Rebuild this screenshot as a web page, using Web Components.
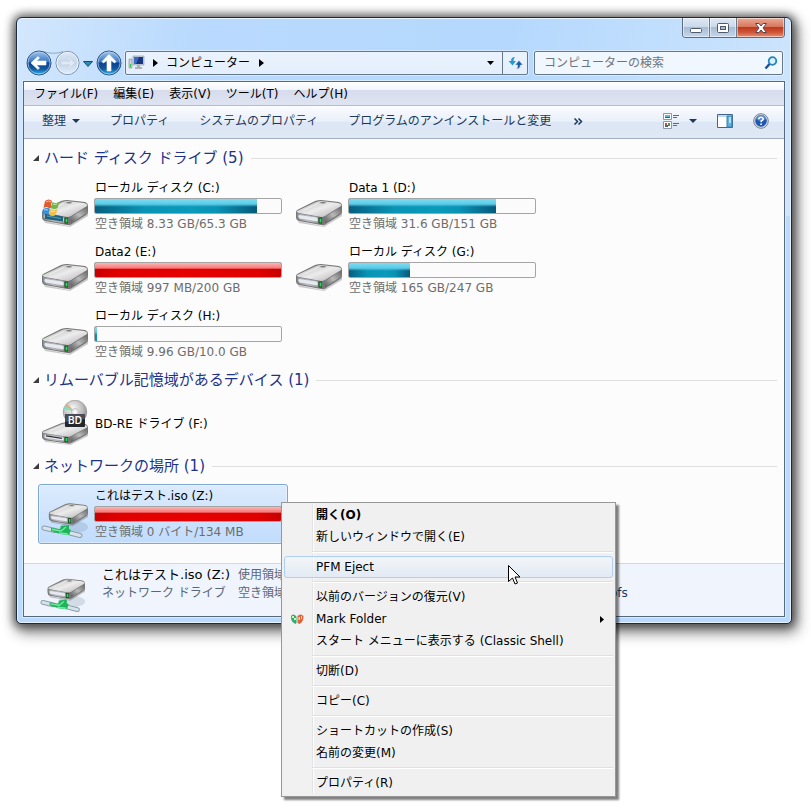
<!DOCTYPE html>
<html lang="ja">
<head>
<meta charset="utf-8">
<title>コンピューター</title>
<style>
  body {
    margin: 0;
    padding: 17px 19px 24px 16px;
    background: #fff;
    color: #000;
    font: 12px/18px "DejaVu Sans", "Noto Sans CJK JP", sans-serif;
  }
</style>
</head>
<body>

<explorer-window>
  <caption-buttons slot="caption"></caption-buttons>
  <nav-bar slot="nav" location="コンピューター"></nav-bar>
  <menu-bar slot="bars"></menu-bar>
  <command-bar slot="bars"></command-bar>

  <drive-group label="ハード ディスク ドライブ (5)">
    <drive-tile name="ローカル ディスク (C:)" icon="system" used="87" free="空き領域 8.33 GB/65.3 GB"></drive-tile>
    <drive-tile name="Data 1 (D:)" icon="disk" used="79" free="空き領域 31.6 GB/151 GB"></drive-tile>
    <drive-tile name="Data2 (E:)" icon="disk" used="100" full free="空き領域 997 MB/200 GB"></drive-tile>
    <drive-tile name="ローカル ディスク (G:)" icon="disk" used="33" free="空き領域 165 GB/247 GB"></drive-tile>
    <drive-tile name="ローカル ディスク (H:)" icon="disk" used="1" free="空き領域 9.96 GB/10.0 GB"></drive-tile>
  </drive-group>
  <drive-group label="リムーバブル記憶域があるデバイス (1)">
    <drive-tile name="BD-RE ドライブ (F:)" icon="optical"></drive-tile>
  </drive-group>
  <drive-group label="ネットワークの場所 (1)">
    <drive-tile name="これはテスト.iso (Z:)" icon="network" used="100" full selected free="空き領域 0 バイト/134 MB"></drive-tile>
  </drive-group>

  <details-pane slot="details"></details-pane>
</explorer-window>

<context-menu>
  <menu-entry strong>開く(O)</menu-entry>
  <menu-entry>新しいウィンドウで開く(E)</menu-entry>
  <menu-line></menu-line>
  <menu-entry active>PFM Eject</menu-entry>
  <menu-line></menu-line>
  <menu-entry>以前のバージョンの復元(V)</menu-entry>
  <menu-entry submenu>
    <svg slot="icon" width="14" height="12" viewBox="0 0 14 12">
      <path d="M1 3q2-3 5 0l.5 1v6l-1 1q-5-2-4.500-8z" fill="#2fae74"/>
      <path d="M7.500 3q3-3 6 0q0 6-4 8l-2-1z" fill="#e0633a"/>
      <path d="M2 3h2v2H2zM4 5h2v2H4z" fill="#d8f5b0"/>
      <path d="M11 3h1v3h-1zM8.500 4h1.500v3H8.500z" fill="#f9d9a0"/>
    </svg>
    Mark Folder
  </menu-entry>
  <menu-entry>スタート メニューに表示する (Classic Shell)</menu-entry>
  <menu-line></menu-line>
  <menu-entry>切断(D)</menu-entry>
  <menu-line></menu-line>
  <menu-entry>コピー(C)</menu-entry>
  <menu-line></menu-line>
  <menu-entry>ショートカットの作成(S)</menu-entry>
  <menu-entry>名前の変更(M)</menu-entry>
  <menu-line></menu-line>
  <menu-entry>プロパティ(R)</menu-entry>
</context-menu>

<mouse-pointer></mouse-pointer>

<script>
  // Shared reset for every shadow root.
  const base = `
    :host, * { box-sizing: border-box; }
    svg { display: block; }
    button {
      margin: 0;
      padding: 0;
      border: 0;
      background: none;
      color: inherit;
      font: inherit;
      text-align: left;
      white-space: nowrap;
    }
  `;

  function render(el, css, html) {
    const shadow = el.attachShadow({ mode: "open" });
    shadow.innerHTML = `<style>${base}${css}</style>${html}`;
    return shadow;
  }

  class ExplorerWindow extends HTMLElement {
    constructor() {
      super();
      render(this, `
        :host {
          display: block;
          padding: 0 6px 6px;
          border: 1px solid #1c2a3c;
          border-radius: 6px 6px 5px 5px;
          background: linear-gradient(100deg, #d3e7fd 0, #b9dafd 22%, #b4d8fe 60%, #c4e0fd 85%, #cfe5fc 100%) top / 100% 198px no-repeat, #b9dafd;
          box-shadow: inset 0 0 0 1px #e6f3ff, 0 0 9px 3px rgba(0, 0, 0, .5), 3px 6px 14px 3px rgba(0, 0, 0, .45);
        }
        .caption {
          display: flex;
          justify-content: flex-end;
          height: 33px;
          align-items: flex-start;
        }
        .client {
          margin-top: 6px;
          border: 1px solid #56687c;
          background: #fcfcfc;
          box-shadow: 0 0 0 1px #d9ecff;
        }
        .view { padding: 5px 7px 19px 9px; }
      `, `
        <div class="caption"><slot name="caption"></slot></div>
        <slot name="nav"></slot>
        <div class="client">
          <slot name="bars"></slot>
          <main class="view"><slot></slot></main>
          <slot name="details"></slot>
        </div>
      `);
    }
  }

  class CaptionButtons extends HTMLElement {
    constructor() {
      super();
      render(this, `
        :host {
          display: flex;
          height: 20px;
          border: 1px solid #5d6b7a;
          border-top: 0;
          border-radius: 0 0 4px 4px;
          overflow: hidden;
        }
        button {
          display: grid;
          place-items: center;
          width: 27px;
          background: linear-gradient(#dfe9f5 0, #c9d8ea 48%, #a9bdd6 50%, #c3d6ec 100%);
          border-right: 1px solid #6c7b8c;
          box-shadow: inset 0 0 0 1px rgba(255, 255, 255, .5);
        }
        .close {
          width: 47px;
          border-right: 0;
          background: linear-gradient(#e9a995 0, #d9775e 46%, #bd3a1e 50%, #cf5436 75%, #e89074 100%);
        }
      `, `
        <button aria-label="最小化"><svg width="14" height="12"><rect x="1.5" y="6.5" width="11" height="4" rx="1" fill="#fff" stroke="#4f5a68"/></svg></button>
        <button aria-label="最大化"><svg width="14" height="12"><rect x="1.500" y="1.500" width="11" height="9" rx="1" fill="#fff" stroke="#4f5a68"/><rect x="4.500" y="4.500" width="5" height="3" fill="#a9bbd2" stroke="#4f5a68"/></svg></button>
        <button class="close" aria-label="閉じる"><svg width="14" height="12"><path d="M1.500 1.500h3.500l2 2.500 2-2.500h3.500l-3.500 4.500 3.500 4.500H9L7 8l-2 2.500H1.500L5 6z" fill="#fff" stroke="#5a4550"/></svg></button>
      `);
    }
  }

  class NavBar extends HTMLElement {
    constructor() {
      super();
      render(this, `
        :host { display: flex; align-items: center; height: 24px; }
        .travel { display: flex; align-items: center; gap: 3px; margin-left: 3px; }
        .address, .search {
          display: flex;
          align-items: center;
          height: 24px;
          border: 1px solid #66788c;
          border-radius: 2px;
          background: linear-gradient(#eaf3fd, #e4effc);
          box-shadow: 0 0 0 1px rgba(255, 255, 255, .4);
        }
        .address { flex: 399; margin-left: 3px; gap: 8px; padding-left: 2px; }
        .crumb { display: flex; align-items: center; gap: 9px; }
        .grow { flex: 1; }
        .refresh {
          display: grid;
          place-items: center;
          width: 25px;
          height: 22px;
          border-left: 1px solid #66788c;
        }
        .search { flex: 234; min-width: 0; margin: 0 2px 0 6px; padding: 0 4px 0 9px; background: #f0f7fe; }
        input {
          flex: 1;
          min-width: 0;
          padding: 0;
          border: 0;
          outline: 0;
          background: none;
          font: inherit;
        }
        input::placeholder { color: #6f7479; opacity: 1; }
        button svg { overflow: visible; }
      `, `
        <div class="travel">
          <button aria-label="戻る"><svg width="26" height="26" viewBox="0 0 26 26">
            <defs>
              <linearGradient id="orb" x1="0" y1="0" x2="0" y2="1">
                <stop offset="0" stop-color="#a3c6ee"/><stop offset=".45" stop-color="#3a77c0"/>
                <stop offset=".5" stop-color="#0d4392"/><stop offset=".75" stop-color="#12599f"/><stop offset="1" stop-color="#35c0f5"/>
              </linearGradient>
              <linearGradient id="dim" x1="0" y1="0" x2="0" y2="1">
                <stop offset="0" stop-color="#dde7f3"/><stop offset=".5" stop-color="#c6d7eb"/><stop offset="1" stop-color="#e0eefc"/>
              </linearGradient>
            </defs>
            <path d="M17 1.500q11 3.500 20 0" fill="none" stroke="#8fa8c4"/>
            <circle cx="13" cy="13" r="12" fill="url(#orb)" stroke="#31547f"/><circle cx="13" cy="13" r="11" fill="none" stroke="#b6d2f2" stroke-opacity=".7"/><path d="M5 13l7-6.500 1.500 1.500-3 3H20v4h-9.500l3 3-1.500 1.500z" fill="#fff" stroke="#fff" stroke-width=".6"/></svg></button>
          <button aria-label="進む"><svg width="25" height="26" viewBox="0 0 26 26"><circle cx="13" cy="13" r="12" fill="url(#dim)" stroke="#7488a0"/><circle cx="13" cy="13" r="11" fill="none" stroke="#eff6fe"/><path d="M21 13l-7-6.500-1.500 1.500 3 3H6v4h9.500l-3 3 1.500 1.500z" fill="#dfe9f5" stroke="#b9c9dc" stroke-width=".6"/></svg></button>
          <button aria-label="最近表示したページ"><svg width="10" height="7"><path d="M.5 1.500h9L5 6.500z" fill="#2a8bb5" stroke="#1a4a70"/></svg></button>
          <button aria-label="上へ"><svg width="26" height="26" viewBox="0 0 26 26"><circle cx="13" cy="13" r="12" fill="url(#orb)" stroke="#31547f"/><circle cx="13" cy="13" r="11" fill="none" stroke="#b6d2f2" stroke-opacity=".7"/><path d="M13 4.500l7 7-1.500 1.500-3.500-3V21h-4V10l-3.500 3L6 11.500z" fill="#fff" stroke="#fff" stroke-width=".6"/></svg></button>
        </div>
        <div class="address">
          <svg width="17" height="16" viewBox="0 0 17 16">
            <path d="M1 4h3v9H1z" fill="#c9d0d6" stroke="#7f8a92" stroke-width=".6"/><path d="M2 9h1v3H2z" fill="#3cbf4a"/>
            <path d="M5 1h11v9H5z" fill="#c7d0da" stroke="#8b97a5" stroke-width=".6"/><path d="M6 2h9v7H6z" fill="#17377f"/><path d="M6 2h5l-3 7H6z" fill="#3a69c4"/>
            <path d="M9 10h3v2h2v2H7v-2h2z" fill="#a9b2bb"/>
          </svg>
          <svg width="5" height="8"><path d="M0 0l5 4-5 4z"/></svg>
          <button class="crumb">${this.getAttribute("location")}<svg width="5" height="8"><path d="M0 0l5 4-5 4z"/></svg></button>
          <span class="grow"></span>
          <button aria-label="以前の場所"><svg width="7" height="4"><path d="M0 0h7L3.500 4z"/></svg></button>
          <button class="refresh" aria-label="最新の情報に更新"><svg width="15" height="14" viewBox="0 0 15 14"><path d="M7 1Q3 1 3 5H.5l4 4.500L8 5H5.500Q5.500 2.500 7 1z" fill="#2b9ace"/><path d="M8.500 13q4 0 4-4H15l-4-4.500L7 9h2.500q.5 2.500-1 4z" fill="#1c5ca8" stroke="#e8f2fc" stroke-width=".5"/></svg></button>
        </div>
        <div class="search">
          <input type="search" aria-label="コンピューターの検索" placeholder="コンピューターの検索">
          <svg width="14" height="14" viewBox="0 0 14 14"><circle cx="8.500" cy="5" r="3.800" fill="#d9f0fd" stroke="#2485c4" stroke-width="1.800"/><path d="M5.500 8L1.500 12.500" stroke="#1d4f96" stroke-width="2.400"/></svg>
        </div>
      `);
    }
  }

  class MenuBar extends HTMLElement {
    constructor() {
      super();
      const labels = ["ファイル(F)", "編集(E)", "表示(V)", "ツール(T)", "ヘルプ(H)"];
      render(this, `
        :host {
          display: flex;
          gap: 15px;
          align-items: center;
          height: 24px;
          padding: 0 10px;
          border-bottom: 1px solid #b3bccb;
          background: linear-gradient(#fff 0, #f1f4fa 35%, #d6dced 36%, #dfe4f2 100%);
        }
      `, labels.map(label => `<button>${label}</button>`).join(""));
    }
  }

  class CommandBar extends HTMLElement {
    constructor() {
      super();
      render(this, `
        :host {
          display: flex;
          align-items: center;
          height: 33px;
          padding: 0 15px 2px 3px;
          border-bottom: 1px solid #a3afc0;
          background: linear-gradient(#fbfcfe 0, #e9f0fa 48%, #dce6f4 50%, #dfe8f5 100%);
          color: #1e395b;
        }
        button { display: flex; align-items: center; gap: 6px; padding: 0 15px; }
        .more { padding: 0 8px; }
        .right { display: flex; gap: 20px; margin-left: auto; }
        .right button { padding: 0; gap: 9px; }
      `, `
        <button>整理<svg width="8" height="4"><path d="M0 0h8L4 4z" fill="#1e395b"/></svg></button>
        <button>プロパティ</button>
        <button>システムのプロパティ</button>
        <button>プログラムのアンインストールと変更</button>
        <button class="more" aria-label="その他のコマンド"><svg width="9" height="7"><path d="M.5.500l3 3-3 3M4.500.500l3 3-3 3" fill="none" stroke="#1e395b" stroke-width="1.500"/></svg></button>
        <div class="right">
          <button aria-label="表示方法の変更">
            <svg width="17" height="16" viewBox="0 0 17 16"><path d="M.5.500h8v6h-8zM.5 8.500h8v7h-8z" fill="#fff" stroke="#8a98a8"/><path d="M2 2h5v3H2z" fill="#5bb7d8"/><path d="M2 4h5v1H2z" fill="#2d6172"/><path d="M2 10h2v2H2z" fill="#d64b32"/><path d="M5 10h2v3H5z" fill="#3a9d48"/><path d="M2 12h3v2H2z" fill="#3466c4"/><path d="M10 2.500h6M10 4.500h4M10 10.500h6M10 12.500h4" stroke="#5d6978"/></svg>
            <svg width="8" height="4"><path d="M0 0h8L4 4z" fill="#1e395b"/></svg>
          </button>
          <button aria-label="プレビュー ウィンドウを表示"><svg width="16" height="14"><path d="M.5.500h15v13H.5z" fill="#fff" stroke="#42648c"/><path d="M1 1h14v2H1z" fill="#c5d7ea"/><path d="M10 2h5v11h-5z" fill="#59b4df" stroke="#397fb1"/><path d="M12 3h2v6h-2z" fill="#b7e2f5"/></svg></button>
          <button aria-label="ヘルプ"><svg width="16" height="16" viewBox="0 0 16 16"><circle cx="8" cy="8" r="7.300" fill="#d5dce6" stroke="#79818d"/><circle cx="8" cy="8" r="5.800" fill="#1e58b3"/><path d="M3 6q5 4 10 0-1-4-5-4T3 6z" fill="#5488d0"/><path d="M5.800 6.200Q5.900 4.300 8 4.300t2.200 1.800Q10.200 7.200 8.200 8v1.300" fill="none" stroke="#fff" stroke-width="1.500"/><path d="M7.300 10.500h1.600V12H7.300z" fill="#fff"/></svg></button>
        </div>
      `);
    }
  }

  class DriveGroup extends HTMLElement {
    constructor() {
      super();
      render(this, `
        :host { display: block; }
        :host(:not(:first-of-type)) { margin-top: 2px; }
        h2 {
          display: flex;
          align-items: center;
          gap: 7px;
          height: 28px;
          margin: 0 0 4px;
          color: #1e3287;
          font-size: 15px;
          font-weight: 400;
          white-space: nowrap;
        }
        h2 svg { margin-right: -2px; }
        h2::after { content: ""; flex: 1; border-top: 1px solid #dedfe1; }
        .tiles {
          display: grid;
          grid-template-columns: repeat(auto-fill, 250px);
          gap: 4px;
          margin-left: 5px;
        }
      `, `
        <h2><svg width="6" height="6"><path d="M6 0v6H0z" fill="#3c3c3c"/></svg>${this.getAttribute("label")}</h2>
        <div class="tiles"><slot></slot></div>
      `);
    }
  }

  // The case is drawn in a 48 x 48 box, standing on the lower edge.
  const driveCase = `
    <defs>
      <linearGradient id="top" x1="0" y1="0" x2="1" y2="1"><stop offset="0" stop-color="#b0b0b0"/><stop offset=".5" stop-color="#ececec"/><stop offset="1" stop-color="#b0b0b0"/></linearGradient>
      <linearGradient id="front" x1="0" y1="0" x2="1" y2="0"><stop offset="0" stop-color="#8c8c8c"/><stop offset=".4" stop-color="#d2d2d2"/><stop offset="1" stop-color="#6e6e6e"/></linearGradient>
      <linearGradient id="side" x1="0" y1="1" x2="1" y2="0"><stop offset="0" stop-color="#5c5c5c"/><stop offset=".5" stop-color="#b9b9b9"/><stop offset="1" stop-color="#6a6a6a"/></linearGradient>
      <radialGradient id="disc" cx=".4" cy=".35" r=".7"><stop offset="0" stop-color="#fafafa"/><stop offset=".6" stop-color="#bebebe"/><stop offset="1" stop-color="#858585"/></radialGradient>
    </defs>`;

  const driveBody = `
    <path d="M3 39l25 5 19-13v3L29 45 4 41z" fill="#000" opacity=".2"/>
    <path d="M1 30q0-2 3-3l16-8q3-1 6-1l18 2q3 1 3 4v6q0 2-2 3L31 42q-2 2-5 1L4 39q-3-1-3-4z" fill="#777"/>
    <path d="M2 29l19-9q3-1 5-1l17 2q4 1 3 3L30 34q-2 1-4 1L4 31q-3-1-2-2z" fill="url(#top)"/>
    <path d="M2 31q12 3 24 4 2 0 3 2v3q0 3-3 2L5 38q-3-1-3-4z" fill="url(#front)"/>
    <path d="M30 35l16-10v5q0 1-2 2L30 41z" fill="url(#side)"/>
    <path d="M4 32.500l17 2.500q2 0 2 2v2q0 1-2 .7L5 37q-2-1-2-3z" fill="#e6eaf0" stroke="#8f949b" stroke-width=".6"/>
    <path d="M23.500 35.500h3.500v6h-3.500z" fill="#173d20"/><path d="M24.500 36.500h2v4h-2z" fill="#21e04c"/>
    <ellipse cx="28" cy="20.700" rx="3" ry=".8" fill="#777"/><path d="M8 28.500L23 21.500" stroke="#fff" opacity=".6"/>`;

  const driveIcons = {
    disk: driveBody,
    system: `${driveBody}
      <path d="M4 31l18 3.500v5L4 37z" fill="#24627a"/><path d="M6 34l14 2.500" stroke="#4ba4bf"/>
      <path d="M4 19q4-3 7 0l-1.500 7q-3-2-7 0z" fill="#e15b2b"/>
      <path d="M11.500 20q3 2 7 0l-2 6q-3 2-6.500 0z" fill="#71b645"/>
      <path d="M2 27q4-2 7 0l-1.500 6q-3-2-6.500 0z" fill="#3b8fd4"/>
      <path d="M9.700 27q4 2 7 0l-2 6q-3 2-6.500 0z" fill="#f4c04a"/>
      <path d="M5 20q3-2 5 0M12 22q2 1 4 0M3 28q2-1 4 0M10 29q2 1 4 0" fill="none" stroke="#fff" opacity=".6"/>`,
    optical: `<g transform="translate(0 7) scale(1 .85)">${driveBody}<path d="M5 34l16 3" stroke="#333" stroke-width="1.500"/></g>
      <circle cx="34" cy="12" r="11.800" fill="url(#disc)" stroke="#8c8c8c" stroke-width=".6"/>
      <path d="M34 12L22.500 9q1-3 3-5z" fill="#6fe0c0" opacity=".8"/><path d="M34 12L24 6l2-3z" fill="#f3a46c" opacity=".7"/><path d="M34 12l10 6-4 4z" fill="#fff" opacity=".7"/>
      <circle cx="34" cy="12" r="3.500" fill="#e9e9e9" stroke="#aaa" stroke-width=".6"/><circle cx="34" cy="12" r="1.500" fill="#fff"/>
      <rect x="24" y="14" width="20" height="13" rx="1" fill="#24262d"/><path d="M24 14h20v5q-10 0-20 3z" fill="#4b4e59"/>
      <text x="34" y="24" text-anchor="middle" fill="#fff" font-family="Inter, sans-serif" font-size="10" font-weight="600">BD</text>`,
    network: `<ellipse cx="33" cy="37" rx="14" ry="6" fill="#5a7691" opacity=".2"/>
      <g transform="translate(7 -2) scale(.85)">${driveBody}</g>
      <path d="M3 38l11 2.500M29 43l10 2.500" stroke="#8b9eac" stroke-width="5" stroke-linecap="round"/>
      <path d="M3 38l11 2.500M29 43l10 2.500" stroke="#d7e3eb" stroke-width="3" stroke-linecap="round"/>
      <path d="M10 38l9 1 1-3 8-1v4l2 1-2 5-9-1-9-3z" fill="#1eb45c"/><path d="M11 39.500l9 1.500 5-4M18 43l9 1" fill="none" stroke="#6fec9b" stroke-width="1.500"/>`
  };

  class DriveIcon extends HTMLElement {
    constructor() {
      super();
      render(this, `
        :host { display: block; width: 48px; height: 48px; }
        svg { width: 100%; height: 100%; }
      `, `<svg viewBox="0 0 48 48" aria-hidden="true">${driveCase}${driveIcons[this.getAttribute("kind")]}</svg>`);
    }
  }

  class DriveTile extends HTMLElement {
    constructor() {
      super();
      const free = this.getAttribute("free");
      const used = this.getAttribute("used");
      render(this, `
        :host {
          display: grid;
          grid-template-columns: 48px 188px;
          gap: 5px;
          align-items: center;
          height: ${free ? 60 : 52}px;
          padding-left: 2px;
          border: 1px solid transparent;
          border-radius: 3px;
          white-space: nowrap;
        }
        :host([selected]) {
          border-color: #7da8d4;
          background: linear-gradient(#dcebfc, #c1dcfc);
          box-shadow: inset 0 0 0 1px rgba(255, 255, 255, .4);
        }
        .name, .free { padding-left: 1px; }
        .free { color: #6d6d6d; }
        .bar {
          height: 16px;
          margin: 1px 0;
          border: 1px solid #a5a5a5;
          border-radius: 2px;
          background: #fbfbfb;
          overflow: hidden;
        }
        .fill {
          height: 100%;
          background:
            linear-gradient(#7bdcf3 0, #5ccbe6 36%, transparent 56%),
            linear-gradient(90deg, #075f7f 0, #0993b4 30%, #0a9aba 60%, #0993b4 75%, #065a7b 100%);
        }
        :host([full]) .fill {
          background:
            linear-gradient(#fcb5b5 0, #f67b7b 36%, transparent 46%),
            linear-gradient(90deg, #c80000 0, #e00000 12%, #e60000 50%, #e00000 88%, #c80000 100%);
        }
      `, `
        <drive-icon kind="${this.getAttribute("icon")}"></drive-icon>
        <div>
          <div class="name">${this.getAttribute("name")}</div>
          ${free ? `<div class="bar" role="meter" aria-valuenow="${used}" aria-valuemin="0" aria-valuemax="100"><div class="fill" style="width:${used}%"></div></div>
          <div class="free">${free}</div>` : ""}
        </div>
      `);
    }
  }

  class DetailsPane extends HTMLElement {
    constructor() {
      super();
      render(this, `
        :host {
          display: grid;
          grid-template-columns: 54px 128px 364px auto;
          column-gap: 8px;
          align-items: start;
          height: 53px;
          padding: 2px 16px 0;
          border-top: 1px solid #ccd9ea;
          background: #f0f4fc;
          color: #5a6779;
          white-space: nowrap;
        }
        drive-icon { width: 46px; height: 46px; }
        .name { color: #000; font-size: 13px; }
        .value { color: #1e395b; }
      `, `
        <drive-icon kind="network"></drive-icon>
        <div><div class="name">これはテスト.iso (Z:)</div><div>ネットワーク ドライブ</div></div>
        <div><div>使用領域</div><div>空き領域</div></div>
        <div class="value"><br>ofs</div>
      `);
    }
  }

  class ContextMenu extends HTMLElement {
    constructor() {
      super();
      render(this, `
        :host {
          position: absolute;
          left: 281px;
          top: 502px;
          width: 335px;
          padding: 1px 2px 2px;
          border: 1px solid #979797;
          background: linear-gradient(90deg, #f1f1f1 28px, #e2e3e3 28px, #e2e3e3 29px, #fff 29px, #fff 30px, #f0f0f0 30px) content-box, #f0f0f0;
          box-shadow: 3px 3px 2px rgba(0, 0, 0, .5);
        }
      `, `<div role="menu"><slot></slot></div>`);
    }
  }

  class MenuEntry extends HTMLElement {
    constructor() {
      super();
      render(this, `
        :host { display: block; }
        button {
          display: grid;
          grid-template-columns: 18px 1fr auto;
          gap: 10px;
          align-items: center;
          width: 100%;
          height: 22px;
          padding: 0 8px 0 3px;
          border: 1px solid transparent;
          border-radius: 3px;
        }
        .icon { display: grid; place-items: center; }
        :host([strong]) button { font-weight: 700; }
        :host([active]) button {
          border-color: #aecff7;
          background: linear-gradient(rgba(243, 246, 250, .8), rgba(223, 233, 245, .8));
        }
      `, `
        <button role="menuitem">
          <span class="icon"><slot name="icon"></slot></span>
          <span><slot></slot></span>
          ${this.hasAttribute("submenu") ? `<svg width="4" height="7"><path d="M0 0l4 3.500L0 7z"/></svg>` : ""}
        </button>
      `);
    }
  }

  class MenuLine extends HTMLElement {
    constructor() {
      super();
      render(this, `
        :host { display: block; padding: 3px 0 3px 28px; }
        div { height: 2px; border-top: 1px solid #e0e0e0; background: #fff; }
      `, `<div role="separator"></div>`);
    }
  }

  class MousePointer extends HTMLElement {
    constructor() {
      super();
      render(this, `
        :host { position: absolute; left: 508px; top: 565px; pointer-events: none; }
      `, `<svg width="13" height="20"><path d="M.5.500v16l4-3.500 2.500 6 2.500-1-2.500-6h5z" fill="#fff" stroke="#000"/></svg>`);
    }
  }

  customElements.define("explorer-window", ExplorerWindow);
  customElements.define("caption-buttons", CaptionButtons);
  customElements.define("nav-bar", NavBar);
  customElements.define("menu-bar", MenuBar);
  customElements.define("command-bar", CommandBar);
  customElements.define("drive-icon", DriveIcon);
  customElements.define("drive-group", DriveGroup);
  customElements.define("drive-tile", DriveTile);
  customElements.define("details-pane", DetailsPane);
  customElements.define("context-menu", ContextMenu);
  customElements.define("menu-entry", MenuEntry);
  customElements.define("menu-line", MenuLine);
  customElements.define("mouse-pointer", MousePointer);
</script>
</body>
</html>
